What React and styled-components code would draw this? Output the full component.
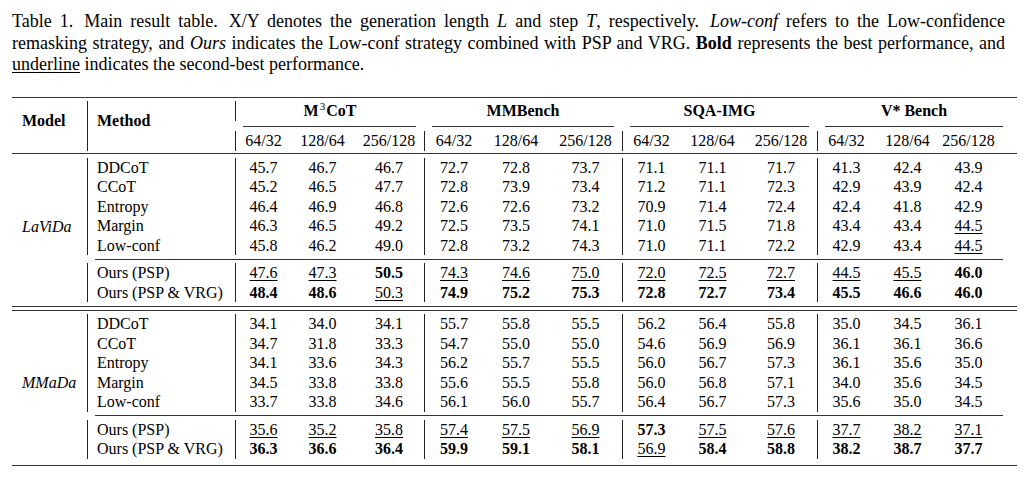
import React from 'react';
import styled, { createGlobalStyle } from 'styled-components';

const GlobalStyle = createGlobalStyle`
  html, body {
    margin: 0;
    padding: 0;
    background: #fff;
  }
  body {
    font-family: "Liberation Serif", "Times New Roman", serif;
    color: #000;
  }
`;

const COLS = [75, 148, 56, 63, 70, 59, 66, 73, 58, 65, 72, 58, 65, 77];

const GROUPS = [
  { name: 'M3CoT', key: 'm3cot', trim: [8, 8] },
  { name: 'MMBench', key: 'mmb', trim: [8, 8] },
  { name: 'SQA-IMG', key: 'sqa', trim: [8, 8] },
  { name: 'V* Bench', key: 'vstar', trim: [8, 14] },
];

const STEPS = ['64/32', '128/64', '256/128'];

// "*" = best (bold), "_" = second best (underline)
const SECTIONS = [
  {
    model: 'LaViDa',
    rows: [
      ['DDCoT', '45.7 46.7 46.7 72.7 72.8 73.7 71.1 71.1 71.7 41.3 42.4 43.9'],
      ['CCoT', '45.2 46.5 47.7 72.8 73.9 73.4 71.2 71.1 72.3 42.9 43.9 42.4'],
      ['Entropy', '46.4 46.9 46.8 72.6 72.6 73.2 70.9 71.4 72.4 42.4 41.8 42.9'],
      ['Margin', '46.3 46.5 49.2 72.5 73.5 74.1 71.0 71.5 71.8 43.4 43.4 _44.5'],
      ['Low-conf', '45.8 46.2 49.0 72.8 73.2 74.3 71.0 71.1 72.2 42.9 43.4 _44.5'],
      ['Ours (PSP)', '_47.6 _47.3 *50.5 _74.3 _74.6 _75.0 _72.0 _72.5 _72.7 _44.5 _45.5 *46.0'],
      ['Ours (PSP & VRG)', '*48.4 *48.6 _50.3 *74.9 *75.2 *75.3 *72.8 *72.7 *73.4 *45.5 *46.6 *46.0'],
    ],
  },
  {
    model: 'MMaDa',
    rows: [
      ['DDCoT', '34.1 34.0 34.1 55.7 55.8 55.5 56.2 56.4 55.8 35.0 34.5 36.1'],
      ['CCoT', '34.7 31.8 33.3 54.7 55.0 55.0 54.6 56.9 56.9 36.1 36.1 36.6'],
      ['Entropy', '34.1 33.6 34.3 56.2 55.7 55.5 56.0 56.7 57.3 36.1 35.6 35.0'],
      ['Margin', '34.5 33.8 33.8 55.6 55.5 55.8 56.0 56.8 57.1 34.0 35.6 34.5'],
      ['Low-conf', '33.7 33.8 34.6 56.1 56.0 55.7 56.4 56.7 57.3 35.6 35.0 34.5'],
      ['Ours (PSP)', '_35.6 _35.2 _35.8 _57.4 _57.5 _56.9 *57.3 _57.5 _57.6 _37.7 _38.2 _37.1'],
      ['Ours (PSP & VRG)', '*36.3 *36.6 *36.4 *59.9 *59.1 *58.1 _56.9 *58.4 *58.8 *38.2 *38.7 *37.7'],
    ],
  },
];

const parse = (v) => ({
  text: v.replace(/^[*_]/, ''),
  bold: v[0] === '*',
  under: v[0] === '_',
});

const Page = styled.div`
  padding: 11px 12px 0;
`;

const Caption = styled.div`
  width: 993px;
  font-size: 18px;
  line-height: 21.7px;
`;

const CaptionLine = styled.div`
  text-align: ${(p) => (p.$last ? 'left' : 'justify')};
  text-align-last: ${(p) => (p.$last ? 'left' : 'justify')};
`;

const Wide = styled.span`
  display: inline-block;
  width: 3px;
`;

const Var = styled.i`
  font-style: italic;
`;

const Term = styled.em`
  font-style: italic;
`;

const Strong = styled.b`
  font-weight: 700;
`;

const Under = styled.span`
  text-decoration: underline;
  text-decoration-thickness: 1px;
  text-underline-offset: 2px;
`;

const Sup = styled.sup`
  font-size: 11px;
  font-weight: 400;
  vertical-align: 6px;
  line-height: 0;
  margin: 0 1px;
`;

const Table = styled.table`
  width: 1005px;
  margin-top: 21px;
  border-collapse: separate;
  border-spacing: 0;
  table-layout: fixed;
  font-size: 16px;
  color: #000;
`;

const RuleCell = styled.td`
  padding: ${(p) => p.$above || 0}px ${(p) => p.$trimR || 0}px ${(p) => p.$below || 0}px
    ${(p) => p.$trimL || 0}px;
  font-size: 0;
  line-height: 0;
`;

const Line = styled.div`
  border-top: ${(p) => p.$weight || 1}px solid #333;
`;

const DoubleLine = styled.div`
  height: 3px;
  border-top: 1px solid #333;
  border-bottom: 1px solid #333;
`;

const LabelCell = styled.th`
  padding: 0 0 10px ${(p) => p.$pad}px;
  text-align: left;
  vertical-align: middle;
  font-weight: 700;
  border-left: ${(p) => (p.$divider ? '1px solid #222' : 'none')};
`;

const GroupCell = styled.th`
  height: 20px;
  padding: 0 ${(p) => p.$trimR}px 0 ${(p) => p.$trimL}px;
  text-align: center;
  vertical-align: middle;
  font-weight: 700;
  line-height: 20px;
  border-left: ${(p) => (p.$divider ? '1px solid #222' : 'none')};
`;

const StepCell = styled.th`
  height: 20px;
  padding: 0 ${(p) => (p.$last ? 20 : 0)}px 0 0;
  text-align: center;
  vertical-align: middle;
  font-weight: 400;
  line-height: 20px;
  white-space: nowrap;
  border-left: ${(p) => (p.$divider ? '1px solid #222' : 'none')};
`;

const ModelCell = styled.td`
  padding: 0 0 6px 10px;
  text-align: left;
  vertical-align: middle;
  font-style: italic;
`;

const MethodCell = styled.td`
  height: 19.5px;
  padding: 0 0 0 9px;
  line-height: 19.5px;
  text-align: left;
  white-space: nowrap;
  border-left: 1px solid #222;
`;

const Num = styled.td`
  height: 19.5px;
  padding: 0 ${(p) => (p.$last ? 20 : 0)}px 0 0;
  line-height: 19.5px;
  text-align: center;
  font-weight: ${(p) => (p.$bold ? 700 : 400)};
  text-decoration: ${(p) => (p.$under ? 'underline' : 'none')};
  text-decoration-thickness: 1px;
  text-underline-offset: 2px;
  border-left: ${(p) => (p.$divider ? '1px solid #222' : 'none')};
`;

const GroupName = ({ name }) =>
  name === 'M3CoT' ? (
    <>
      M<Sup>3</Sup>CoT
    </>
  ) : (
    name
  );

const DataRow = ({ method, values, children }) => (
  <tr>
    {children}
    <MethodCell>{method}</MethodCell>
    {values.split(' ').map((v, i) => {
      const c = parse(v);
      return (
        <Num key={i} $divider={i % 3 === 0} $bold={c.bold} $under={c.under} $last={i === 11}>
          {c.text}
        </Num>
      );
    })}
  </tr>
);

const Section = ({ model, rows, first }) => {
  const base = rows.slice(0, 5);
  const ours = rows.slice(5);
  return (
    <tbody>
      {!first && (
        <tr>
          <RuleCell colSpan={14} $above={3.5} $below={3.5}>
            <DoubleLine />
          </RuleCell>
        </tr>
      )}
      {base.map(([method, values], i) => (
        <DataRow key={method} method={method} values={values}>
          {i === 0 && <ModelCell rowSpan={8}>{model}</ModelCell>}
        </DataRow>
      ))}
      <tr>
        <RuleCell colSpan={13} $above={3.5} $below={3.5} $trimL={8} $trimR={14}>
          <Line />
        </RuleCell>
      </tr>
      {ours.map(([method, values]) => (
        <DataRow key={method} method={method} values={values} />
      ))}
    </tbody>
  );
};

const App = () => {
  return (
    <Page>
      <GlobalStyle />
      <Caption>
        <CaptionLine>
          Table 1.<Wide /> Main result table.<Wide /> X/Y denotes the generation length <Var>L</Var> and
          step <Var>T</Var>, respectively.<Wide /> <Term>Low-conf</Term> refers to the Low-confidence
        </CaptionLine>
        <CaptionLine>
          remasking strategy, and <Term>Ours</Term> indicates the Low-conf strategy combined with PSP and
          VRG. <Strong>Bold</Strong> represents the best performance, and
        </CaptionLine>
        <CaptionLine $last>
          <Under>underline</Under> indicates the second-best performance.
        </CaptionLine>
      </Caption>

      <Table>
        <colgroup>
          {COLS.map((w, i) => (
            <col key={i} style={{ width: w }} />
          ))}
        </colgroup>
        <thead>
          <tr>
            <RuleCell colSpan={14} $below={3}>
              <Line $weight={1.6} />
            </RuleCell>
          </tr>
          <tr>
            <LabelCell rowSpan={3} $pad={10}>Model</LabelCell>
            <LabelCell rowSpan={3} $pad={9} $divider>Method</LabelCell>
            {GROUPS.map((g, i) => (
              <GroupCell
                key={g.key}
                colSpan={3}
                $divider={i === 0}
                $trimL={g.trim[0]}
                $trimR={g.trim[1]}
              >
                <GroupName name={g.name} />
              </GroupCell>
            ))}
          </tr>
          <tr>
            {GROUPS.map((g) => (
              <RuleCell key={g.key} colSpan={3} $above={4.5} $below={4.5} $trimL={g.trim[0]} $trimR={g.trim[1]}>
                <Line />
              </RuleCell>
            ))}
          </tr>
          <tr>
            {GROUPS.map((g) =>
              STEPS.map((s, j) => (
                <StepCell key={g.key + s} $divider={j === 0} $last={g.key === 'vstar' && j === 2}>
                  {s}
                </StepCell>
              ))
            )}
          </tr>
          <tr>
            <RuleCell colSpan={14} $above={2} $below={3.5}>
              <Line />
            </RuleCell>
          </tr>
        </thead>

        {SECTIONS.map((sec, si) => (
          <Section key={sec.model} model={sec.model} rows={sec.rows} first={si === 0} />
        ))}

        <tbody>
          <tr>
            <RuleCell colSpan={14} $above={6}>
              <Line $weight={1.6} />
            </RuleCell>
          </tr>
        </tbody>
      </Table>
    </Page>
  );
};

export default App;
